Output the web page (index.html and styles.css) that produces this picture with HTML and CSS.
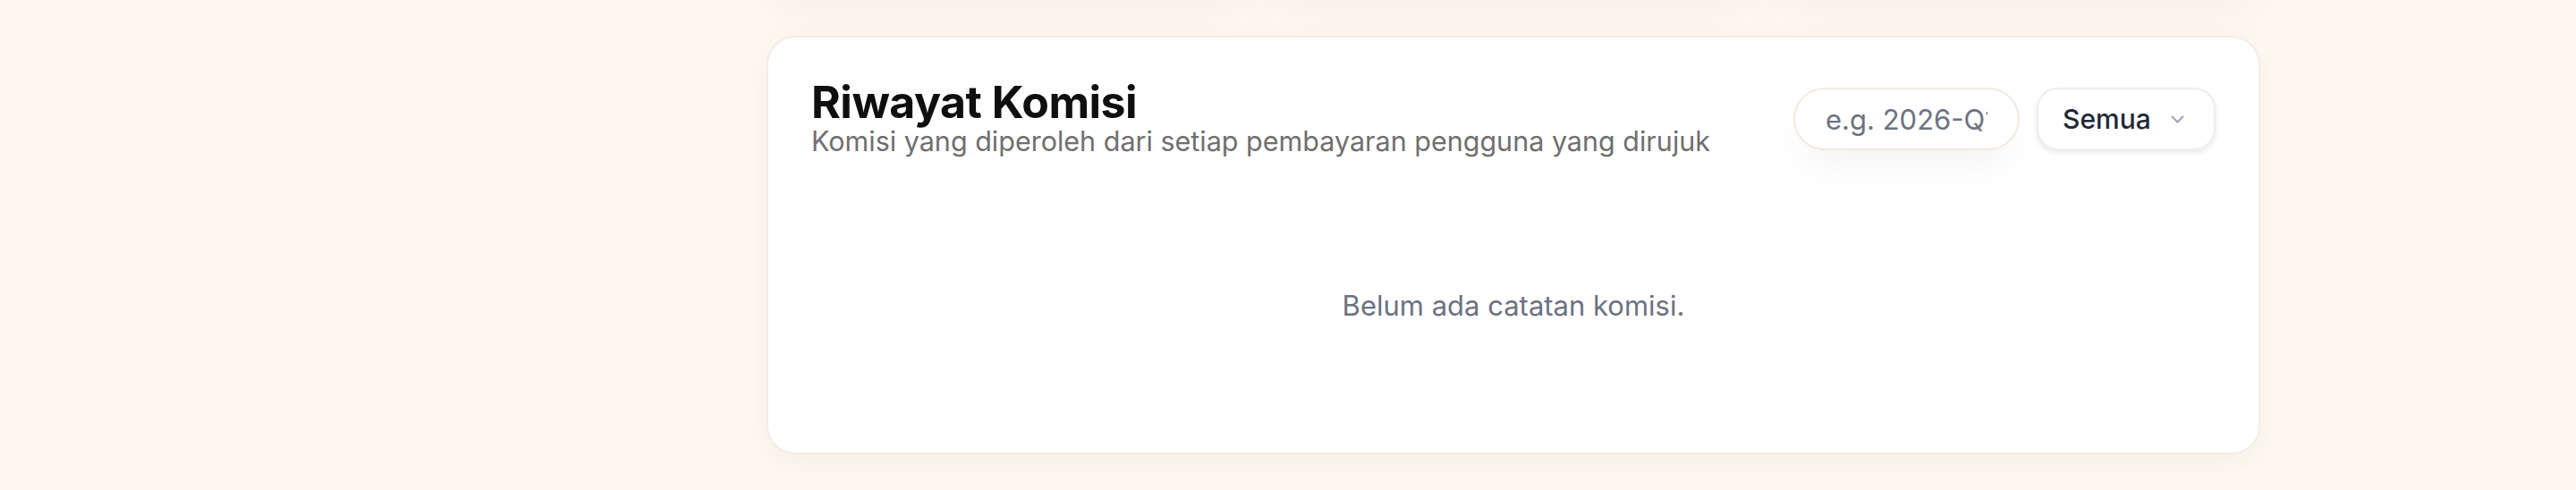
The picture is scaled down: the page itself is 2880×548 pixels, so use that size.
FILE: index.html
```html
<!DOCTYPE html>
<html lang="id">
<head>
  <meta charset="UTF-8">
  <meta name="viewport" content="width=device-width, initial-scale=1.0">
  <title>Riwayat Komisi</title>
  <link rel="stylesheet" href="styles.css">
</head>
<body>
  <div class="layout">
    <aside class="sidebar"></aside>

    <main class="main">
      <div class="content">
        <!-- Stat cards (scrolled above the fold) -->
        <div class="stats">
          <div class="stat-card"></div>
          <div class="stat-card"></div>
          <div class="stat-card"></div>
        </div>

        <!-- Commission history -->
        <section class="card">
          <div class="card-header">
            <div class="card-titles">
              <h2 class="card-title">Riwayat Komisi</h2>
              <p class="card-subtitle">Komisi yang diperoleh dari setiap pembayaran pengguna yang dirujuk</p>
            </div>
            <div class="filters">
              <input class="period-input" type="text" placeholder="e.g. 2026-Q1">
              <button class="status-select" type="button">
                <span>Semua</span>
                <svg class="chevron" width="15" height="9" viewBox="0 0 15 9" fill="none">
                  <path d="M1.5 1.5l6 6 6-6" stroke="#9ca3af" stroke-width="2" stroke-linecap="round" stroke-linejoin="round"/>
                </svg>
              </button>
            </div>
          </div>

          <div class="empty">Belum ada catatan komisi.</div>
        </section>
      </div>
    </main>
  </div>
</body>
</html>
```

FILE: styles.css
```css
* {
  box-sizing: border-box;
}

body {
  font-family: Inter, 'Noto Sans', sans-serif;
  margin: 0;
  height: 548px;
  overflow: hidden;
  background-color: #fef8f1;
  color: #111;
}

.layout {
  display: flex;
}

.sidebar {
  width: 504px;
  flex-shrink: 0;
}

.main {
  flex: 1;
  padding: 0 353px;
}

.content {
  display: flex;
  flex-direction: column;
  gap: 40px;
  padding-top: 40px;
}

.stats {
  margin-top: -240px;
  height: 200px;
  display: grid;
  grid-template-columns: 1fr 1fr 1fr;
  gap: 24px;
}

.stat-card {
  background-color: white;
  border-radius: 32px;
  box-shadow: 0 14px 56px rgba(130, 100, 60, 0.06);
}

.card {
  background-color: white;
  border: 2px solid #f3ede4;
  border-radius: 32px;
  padding: 48px 48px 42px;
  box-shadow: 0 10px 32px rgba(130, 100, 60, 0.06);
}

.card-header {
  display: flex;
  justify-content: space-between;
  align-items: flex-start;
}

.card-title {
  margin: 0;
  font-size: 50px;
  line-height: 48px;
  font-weight: 700;
  letter-spacing: -0.5px;
  color: #0f0f0f;
}

.card-subtitle {
  margin: 0;
  font-size: 30.5px;
  line-height: 40px;
  color: #6f6f6f;
}

.filters {
  display: flex;
  gap: 19px;
  margin-top: 8px;
}

.period-input {
  width: 253px;
  height: 70px;
  padding: 0 34px;
  border: 2px solid #f3eadf;
  border-radius: 999px;
  background-color: white;
  font-family: inherit;
  font-size: 31px;
  color: #374151;
  outline: none;
  box-shadow: 0 24px 40px -10px rgba(0, 0, 0, 0.05);
}

.period-input::placeholder {
  color: #6b7280;
}

.status-select {
  width: 200px;
  height: 70px;
  display: flex;
  align-items: center;
  gap: 22px;
  padding: 0 34px 0 27px;
  background-color: white;
  border: 2px solid #eceef1;
  border-radius: 24px;
  font-family: inherit;
  font-size: 30px;
  font-weight: 500;
  color: #1f2937;
  box-shadow: 0 3px 6px rgba(0, 0, 0, 0.09);
}

.chevron {
  flex-shrink: 0;
}

.empty {
  margin-top: 24px;
  padding: 120px 0 102px;
  text-align: center;
  font-size: 31px;
  line-height: 40px;
  color: #6b7280;
}
```
